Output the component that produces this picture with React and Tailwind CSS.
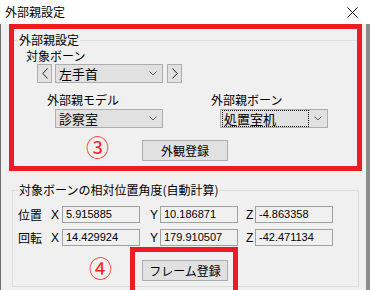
import React from "react";

function Chevron() {
  return (
    <svg width="8" height="5" viewBox="0 0 8 5" className="shrink-0">
      <path d="M0.5 0.5L4 4L7.5 0.5" fill="none" stroke="#606060" strokeWidth="1" />
    </svg>
  );
}

function Combo({ text, focus }) {
  if (focus) {
    return (
      <div className="h-[19px] w-[108px] border border-[#adadad] bg-[#e1e1e1] flex items-center justify-between pl-[1px] pr-[5px]">
        <div className="h-[17px] w-[87px] border border-dotted border-black flex items-center pl-[1px]">
          <span className="text-[13px] leading-[15px] text-black">{text}</span>
        </div>
        <Chevron />
      </div>
    );
  }
  return (
    <div className="h-[19px] w-[108px] border border-[#adadad] bg-[#e1e1e1] flex items-center justify-between pl-[3px] pr-[5px]">
      <span className="text-[13px] leading-[15px] text-black">{text}</span>
      <Chevron />
    </div>
  );
}

function Arrow({ dir }) {
  return (
    <div className="h-[19px] w-[15px] border border-[#adadad] bg-[#e1e1e1] flex items-center justify-center">
      <svg width="6" height="11" viewBox="0 0 6 11">
        {dir === "left" ? (
          <path d="M5.5 0.5L0.8 5.5L5.5 10.5" fill="none" stroke="#222" strokeWidth="1" />
        ) : (
          <path d="M0.5 0.5L5.2 5.5L0.5 10.5" fill="none" stroke="#222" strokeWidth="1" />
        )}
      </svg>
    </div>
  );
}

function Field({ value }) {
  return (
    <div className="h-[17px] w-[78px] border border-[#a0a0a0] bg-[#f0f0f0] flex items-center pl-[3px]">
      <span className="font-['Liberation_Sans',sans-serif] text-[11px] leading-[13px] text-black">{value}</span>
    </div>
  );
}

function Row({ label, x, y, z }) {
  return (
    <div className="flex items-center h-[17px] ml-[5px]">
      <span className="w-[33px] text-[12px] leading-[14px]">{label}</span>
      <span className="w-[11px] font-['Liberation_Sans',sans-serif] text-[12px] leading-[14px]">X</span>
      <Field value={x} />
      <span className="ml-[10px] w-[10px] font-['Liberation_Sans',sans-serif] text-[12px] leading-[14px]">Y</span>
      <Field value={y} />
      <span className="ml-[8px] w-[9px] font-['Liberation_Sans',sans-serif] text-[12px] leading-[14px]">Z</span>
      <div className="w-[79px]">
        <Field value={z} />
      </div>
    </div>
  );
}

function Button({ children }) {
  return (
    <div className="h-[21px] w-[86px] border border-[#adadad] bg-[#e1e1e1] flex items-center justify-center">
      <span className="text-[12px] leading-[14px] text-black">{children}</span>
    </div>
  );
}

export default function App() {
  return (
    <div className="relative w-[370px] h-[290px] overflow-hidden bg-[#8c8c8c] font-['Noto_Sans_CJK_JP',sans-serif] text-black">
      {/* title bar */}
      <div className="h-[24px] w-[370px] bg-white flex items-center justify-between pl-[5px] pr-[12px]">
        <span className="text-[12px] leading-[16px] text-black">外部親設定</span>
        <svg width="11" height="11" viewBox="0 0 11 11">
          <path d="M0.5 0.5L10.5 10.5M10.5 0.5L0.5 10.5" stroke="#111" strokeWidth="1" />
        </svg>
      </div>
      <div className="flex">
        <div className="w-[366px] h-[266px] bg-[#f0f0f0] border-l border-[#6e6e6e] flex flex-col">
          <fieldset className="ml-[11px] mt-[9px] w-[347px] h-[134px] border border-[#dcdcdc]">
            <legend className="ml-[5px] px-[1px] text-[12px] leading-[14px]">外部親設定</legend>
            <div className="mt-[2px] ml-[13px] text-[12px] leading-[14px]">対象ボーン</div>
            <div className="mt-[1px] ml-[24px] flex items-center">
              <Arrow dir="left" />
              <div className="ml-[3px]">
                <Combo text="左手首" />
              </div>
              <div className="ml-[4px]">
                <Arrow dir="right" />
              </div>
            </div>
            <div className="mt-[10px] ml-[34px] flex text-[12px] leading-[14px]">
              <span className="w-[164px]">外部親モデル</span>
              <span>外部親ボーン</span>
            </div>
            <div className="mt-[2px] ml-[42px] flex">
              <Combo text="診察室" />
              <div className="ml-[57px]">
                <Combo text="処置室机" focus />
              </div>
            </div>
            <div className="mt-[12px] ml-[129px]">
              <Button>外観登録</Button>
            </div>
          </fieldset>
          <fieldset className="ml-[11px] mt-[16px] w-[347px] h-[104px] border border-[#dcdcdc]">
            <legend className="ml-[5px] px-[1px] text-[12px] leading-[14px]">対象ボーンの相対位置角度(自動計算)</legend>
            <div className="mt-[9px]">
              <Row label="位置" x="5.915885" y="10.186871" z="-4.863358" />
            </div>
            <div className="mt-[6px]">
              <Row label="回転" x="14.429924" y="179.910507" z="-42.471134" />
            </div>
            <div className="mt-[14px] ml-[129px]">
              <Button>フレーム登録</Button>
            </div>
          </fieldset>
        </div>
        <div className="flex-1" />
      </div>

      {/* annotations */}
      <div className="absolute left-[9px] top-[24px] w-[353px] h-[147px] border-[5px] border-[#ed1c24]" />
      <div className="absolute left-[130px] top-[247px] w-[108px] h-[50px] border-[5px] border-[#ed1c24]" />
      <span className="absolute left-[86px] top-[132px] text-[23px] leading-[28px] text-[#ff1f1f]">③</span>
      <span className="absolute left-[89px] top-[253px] text-[23px] leading-[28px] text-[#ff1f1f]">④</span>
    </div>
  );
}
